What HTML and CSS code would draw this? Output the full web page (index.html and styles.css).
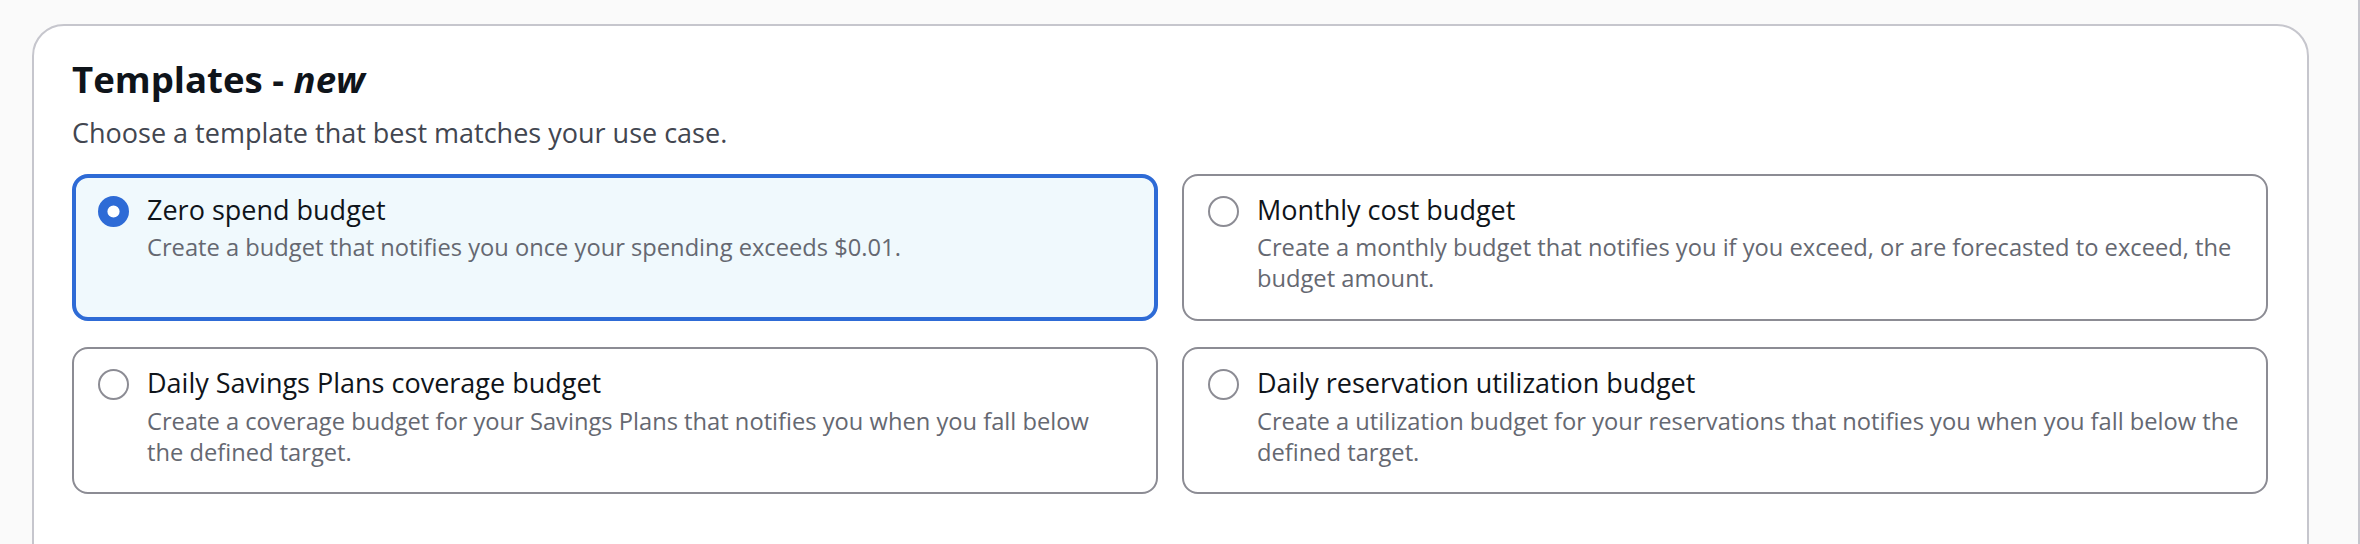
FILE: index.html
```html
<!DOCTYPE html>
<html lang="en">
<head>
<meta charset="utf-8">
<title>Templates</title>
<link rel="stylesheet" href="styles.css">
</head>
<body>
<div class="layout">
  <main class="main">
    <section class="container">
      <header class="header">
        <h2 class="title">Templates - <em>new</em></h2>
        <p class="subtitle">Choose a template that best matches your use case.</p>
      </header>
      <div class="tiles">
        <label class="tile tile-selected">
          <svg class="radio" viewBox="0 0 31 31" width="31" height="31" aria-hidden="true"><circle cx="15.5" cy="15.5" r="10.8" fill="#fff" stroke="#2e6bd6" stroke-width="9.4"/></svg>
          <span class="tile-text">
            <span class="tile-label">Zero spend budget</span>
            <span class="tile-desc">Create a budget that notifies you once your spending exceeds $0.01.</span>
          </span>
        </label>
        <label class="tile">
          <svg class="radio" viewBox="0 0 31 31" width="31" height="31" aria-hidden="true"><circle cx="15.5" cy="15.5" r="14.5" fill="#fff" stroke="#8c8c94" stroke-width="2"/></svg>
          <span class="tile-text">
            <span class="tile-label">Monthly cost budget</span>
            <span class="tile-desc">Create a monthly budget that notifies you if you exceed, or are forecasted to exceed, the budget amount.</span>
          </span>
        </label>
        <label class="tile">
          <svg class="radio" viewBox="0 0 31 31" width="31" height="31" aria-hidden="true"><circle cx="15.5" cy="15.5" r="14.5" fill="#fff" stroke="#8c8c94" stroke-width="2"/></svg>
          <span class="tile-text">
            <span class="tile-label">Daily Savings Plans coverage budget</span>
            <span class="tile-desc">Create a coverage budget for your Savings Plans that notifies you when you fall below the defined target.</span>
          </span>
        </label>
        <label class="tile">
          <svg class="radio" viewBox="0 0 31 31" width="31" height="31" aria-hidden="true"><circle cx="15.5" cy="15.5" r="14.5" fill="#fff" stroke="#8c8c94" stroke-width="2"/></svg>
          <span class="tile-text">
            <span class="tile-label">Daily reservation utilization budget</span>
            <span class="tile-desc">Create a utilization budget for your reservations that notifies you when you fall below the defined target.</span>
          </span>
        </label>
      </div>
    </section>
  </main>
  <aside class="rail"></aside>
</div>
</body>
</html>
```
FILE: styles.css
```css
html, body {
  margin: 0;
  padding: 0;
  height: 100%;
  background: #fafafa;
  font-family: "Open Sans", "Noto Sans", sans-serif;
  overflow: hidden;
}

.layout {
  display: flex;
  height: 100%;
}

.main {
  flex: 1;
  padding: 24px 49px 0 32px;
}

.rail {
  width: 2px;
  background: #c6c6cd;
}

.container {
  background: #ffffff;
  border: 2px solid #c6c6cd;
  border-radius: 32px;
  padding: 30px 39px 40px 38px;
  min-height: 600px;
}

.header {
  margin-bottom: 21px;
}

.title {
  margin: 0;
  font-size: 36.6px;
  line-height: 46px;
  font-weight: 700;
  color: #0f141a;
}

.title em {
  font-style: italic;
}

.subtitle {
  margin: 12px 0 0;
  font-size: 27px;
  line-height: 38.6px;
  color: #424650;
}

.tiles {
  display: grid;
  grid-template-columns: 1fr 1fr;
  gap: 26px 24px;
}

.tile {
  display: flex;
  align-items: flex-start;
  gap: 18px;
  border: 2px solid #8c8c94;
  border-radius: 16px;
  padding: 15px 26px 25px 24px;
  background: #ffffff;
}

.tile-selected {
  border: 4px solid #2e6bd6;
  padding: 13px 24px 23px 22px;
  background: #f0f9fd;
}

.radio {
  flex: none;
  margin-top: 5px;
}

.tile-text {
  display: flex;
  flex-direction: column;
}

.tile-label {
  font-size: 27px;
  line-height: 38.6px;
  color: #0f141a;
}

.tile-desc {
  margin-top: 3px;
  font-size: 23.7px;
  line-height: 30.9px;
  color: #656871;
}
```
